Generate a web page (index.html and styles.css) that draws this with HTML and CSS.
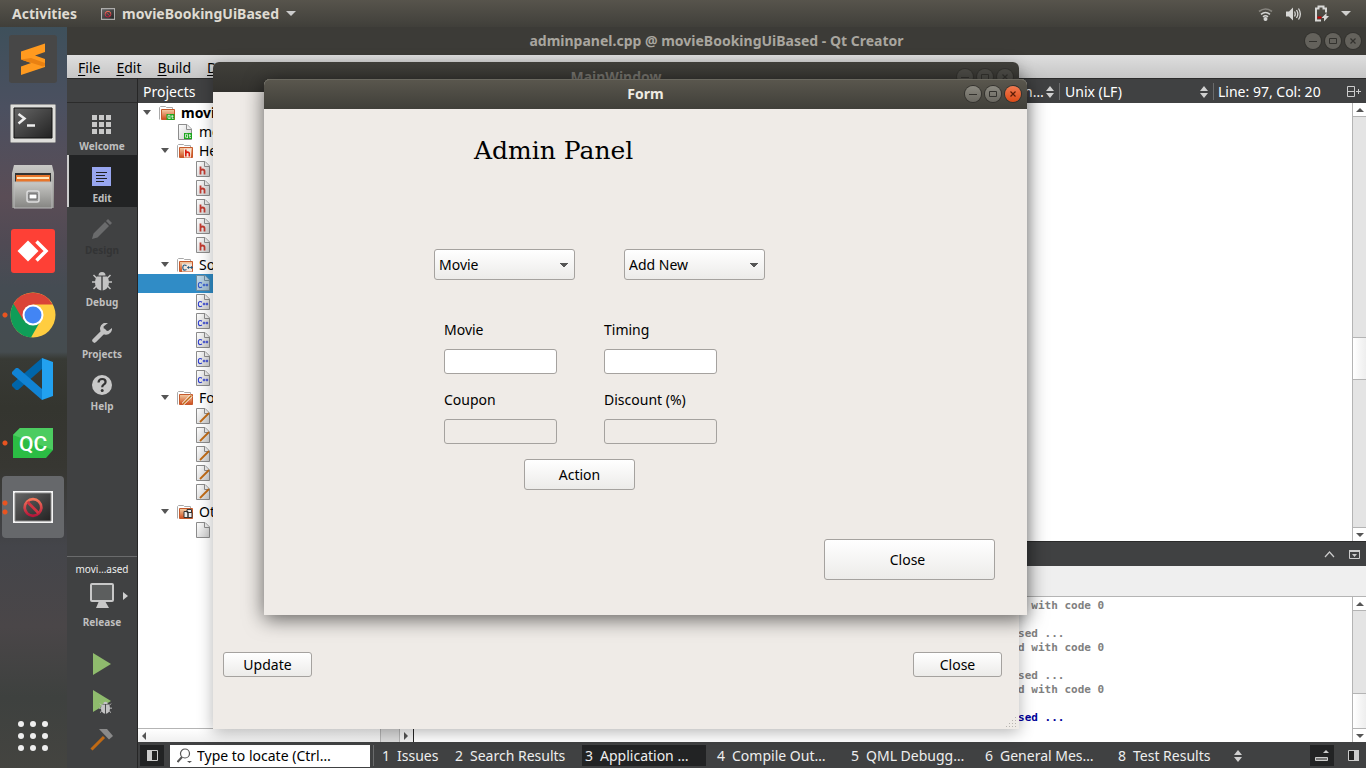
FILE: index.html
```html
<!DOCTYPE html>
<html lang="en">
<head>
<meta charset="utf-8">
<title>movieBookingUiBased</title>
<link rel="stylesheet" href="styles.css">
</head>
<body class="desktop">
<svg class="defs" aria-hidden="true">
  <defs>
    <linearGradient id="gPaper" x1="0" y1="0" x2="1" y2="1"><stop offset="0" stop-color="#fff"/><stop offset="1" stop-color="#ccc"/></linearGradient>
    <linearGradient id="gFolder" x1="0" y1="0" x2="0" y2="1"><stop offset="0" stop-color="#f3cfa6"/><stop offset="1" stop-color="#cf4a1a"/></linearGradient>
    <linearGradient id="gScreen" x1="0" y1="0" x2="1" y2="1"><stop offset="0" stop-color="#666"/><stop offset="1" stop-color="#222"/></linearGradient>
    <linearGradient id="gMetal" x1="0" y1="0" x2="0" y2="1"><stop offset="0" stop-color="#c9c9c6"/><stop offset="1" stop-color="#858582"/></linearGradient>
    <linearGradient id="gRed" x1="0" y1="0" x2="0" y2="1"><stop offset="0" stop-color="#f4775a"/><stop offset="1" stop-color="#b8153a"/></linearGradient>
    <symbol id="file" viewBox="0 0 14 16"><path d="M.5.5h8.500l4.500 4.500v10.500h-13z" fill="url(#gPaper)" stroke="#8c8c8c"/><path d="M8.500.5v5h5" fill="#eee" stroke="#8c8c8c"/></symbol>
    <symbol id="folder" viewBox="0 0 17 16"><path d="M.5 14.500v-12l1-1h5l1 1h6v2" fill="#fff" stroke="#aaa"/><path d="M2.500 4.500h13v10h-13z" fill="url(#gFolder)" stroke="#c65a2c"/></symbol>
    <symbol id="h" viewBox="0 0 8 8"><path d="M1.500 0v8M1.500 4.500q0-1.500 2-1.500t2 1.800v3.200" fill="none" stroke="currentColor" stroke-width="1.800"/></symbol>
    <symbol id="cpp" viewBox="0 0 11 7"><path d="M4.500 1.600q-3.500-1.800-3.700 1.900 0 3.800 3.700 2M5.200 3.500h2.600m.3 0h2.800M6.500 2.200v2.600M9.500 2.200v2.600" fill="none" stroke="currentColor" stroke-width="1.200"/></symbol>
    <symbol id="qt" viewBox="0 0 8 6"><path d="M0 0h8v6h-8z" fill="#1da61d"/><path d="M1.500 1.300h2v3h-2zM3 4l1 1M5.700 1v3.500h1.300M4.800 2.300h2.200" fill="none" stroke="#fff" stroke-width=".7"/></symbol>
    <symbol id="fileH" viewBox="0 0 14 16"><use href="#file" width="14" height="16"/><use href="#h" x="3" y="5" width="8" height="9" color="#c03a30"/></symbol>
    <symbol id="fileC" viewBox="0 0 14 16"><use href="#file" width="14" height="16"/><use href="#cpp" x="1.500" y="6.500" width="11" height="7" color="#2f3fd0"/></symbol>
    <symbol id="fileQ" viewBox="0 0 14 16"><use href="#file" width="14" height="16"/><use href="#qt" x="6" y="9" width="8" height="6"/></symbol>
    <symbol id="fileU" viewBox="0 0 14 16"><use href="#file" width="14" height="16"/><path d="M4 14l9-9" stroke="#c06a14" stroke-width="1.800"/></symbol>
    <symbol id="bug" viewBox="0 0 20 20"><g fill="#c3c3c3"><path d="M6.500 4.500a3.500 3.500 0 0 1 7 0z"/><path d="M9.300 5.500v14c-7-.8-7.500-10-4.500-14zM10.700 5.500v14c7-.8 7.500-10 4.500-14z"/></g><path d="M4.500 7L1.500 4M0 11h4M4.500 15l-3 3M15.500 7l3-3M20 11h-4M15.500 15l3 3" stroke="#c3c3c3" stroke-width="1.500"/></symbol>
    <symbol id="wmin" viewBox="0 0 16 16"><path d="M4 8.500h8" stroke="currentColor" fill="none"/></symbol>
    <symbol id="wmax" viewBox="0 0 16 16"><path d="M4.500 5.500h7v5h-7z" stroke="currentColor" fill="none"/></symbol>
    <symbol id="wcls" viewBox="0 0 16 16"><path d="M5.500 5.500l5 5m0-5l-5 5" stroke="currentColor" stroke-width="1.200" fill="none"/></symbol>
    <symbol id="updown" viewBox="0 0 8 12"><path d="M0 5l4-5 4 5zM0 7l4 5 4-5z" fill="#d0d0d0"/></symbol>
    <symbol id="blocked" viewBox="0 0 40 32"><path d="M0 0h40v32h-40z" fill="#f5f5f5"/><path d="M2 2h36v28h-36z" fill="url(#gScreen)" stroke="#888"/><circle cx="20" cy="16.500" r="8.300" fill="none" stroke="url(#gRed)" stroke-width="2.800"/><path d="M14.500 11l11 11" stroke="#cf3542" stroke-width="2.800"/></symbol>
  </defs>
</svg>

<header class="topbar">
  <button class="top-item">Activities</button>
  <button class="top-item app-menu">
    <svg width="14" height="12"><use href="#blocked"/></svg>
    movieBookingUiBased
    <svg width="10" height="6"><path d="M0 0h10l-5 5z" fill="#ccc"/></svg>
  </button>
  <div class="tray">
    <svg width="15" height="14" fill="none" stroke="#d4d4d2" stroke-width="1.600"><path d="M1 4.500q6.500-5 13 0" stroke="#85837d"/><path d="M3 7.300q4.500-3.600 9 0M5 9.800q2.500-2 5 0"/><circle cx="7.500" cy="12" r="1.200" fill="#d4d4d2"/></svg>
    <svg width="17" height="14"><path d="M1 4.500h3l4-4v13l-4-4h-3z" fill="#d8d8d6"/><path d="M9.500 4.500q1.500 2.500 0 5M11.500 3q2.700 4 0 8M13.500 1.500q3.700 5.500 0 11" fill="none" stroke="#d8d8d6" stroke-width="1.300"/></svg>
    <svg width="15" height="17"><path d="M7 15.500H2V3.500h2.500v-2h5v2H12v4" fill="none" stroke="#d8d8d6" stroke-width="2"/><path d="M3.500 11.500h4v2h-4z" fill="#c00"/><path d="M12.500 8v3h2.500l-5 5.500v-3.500H7.500z" fill="#d8d8d6"/></svg>
    <svg width="10" height="6"><path d="M0 0h10l-5 5z" fill="#d0d0ce"/></svg>
  </div>
</header>

<main class="workspace">
  <nav class="dock" aria-label="Dock">
    <a class="dock-item" href="#" aria-label="Sublime Text"><svg width="48" height="48"><rect width="48" height="48" rx="3" fill="#474747"/><path d="M12 16.500L36 8.500v8.500l-10 3.500 10 3.500v8L12 40v-8.500l10-3.500-10-3.500z" fill="#ff9a1f"/><path d="M12 24.500l22 7 2-1v-2.500l-14-5z" fill="#e98112"/></svg></a>
    <a class="dock-item" href="#" aria-label="Terminal"><svg width="46" height="39"><rect x=".5" y=".5" width="45" height="38" rx="1" fill="#dededb" stroke="#999"/><path d="M4 4h38v30h-38z" fill="url(#gScreen)" stroke="#111"/><path d="M8.500 10l6 4.500-6 5M17 21.500h8" fill="none" stroke="#eee" stroke-width="2.500"/></svg></a>
    <a class="dock-item" href="#" aria-label="Files"><svg width="42" height="46"><path d="M2 1h38l2 8v35H0V9z" fill="url(#gMetal)"/><path d="M3 9h36v9H3z" fill="#333"/><path d="M4 11h34v7H4z" fill="#e8752a"/><path d="M5 14h32" stroke="#ffe5ba" stroke-width="2"/><path d="M2 18h38v26H2z" fill="url(#gMetal)" stroke="#bbb"/><rect x="15" y="27" width="12" height="11" rx="2" fill="#999" stroke="#ddd" stroke-width="1.500"/><path d="M17 30h8v5h-8z" fill="#fff" stroke="#666"/></svg></a>
    <a class="dock-item" href="#" aria-label="AnyDesk"><svg width="44" height="44"><rect width="44" height="44" rx="3" fill="#fe4036"/><path d="M6.500 22L17 11.500 27.500 22 17 32.500z" fill="#fff"/><path d="M25.500 12.500l9.500 9.500-9.500 9.500" fill="none" stroke="#fff" stroke-width="3.500"/></svg></a>
    <a class="dock-item run-1" href="#" aria-label="Google Chrome"><svg width="46" height="46" viewBox="0 0 46 46"><circle cx="23" cy="23" r="22.500" fill="#ffcd40"/><path d="M23 23L3.500 11.800A22.500 22.500 0 0 0 21 45.400l10-17.500z" fill="#0f9d58"/><path d="M3.500 11.800A22.500 22.500 0 0 1 42.700 12.500H23l-9.500 16z" fill="#db4437"/><circle cx="23" cy="23" r="10.500" fill="#fff"/><circle cx="23" cy="23" r="8.500" fill="#4285f4"/></svg></a>
    <a class="dock-item" href="#" aria-label="Visual Studio Code"><svg width="44" height="44"><path d="M31 1v11L7 33H5l-4-4v-2z" fill="#0065a9"/><path d="M31 43V32L7 11H5l-4 4v2z" fill="#1183d4"/><path d="M31 1l11 4v34l-11 4z" fill="#22a1f0"/></svg></a>
    <a class="dock-item run-1" href="#" aria-label="Qt Creator"><svg width="40" height="30"><path d="M7 0h33v22l-7 8H0V7z" fill="#2bbd44"/><path d="M7 0h33v22L0 7z" fill="#4ccc60"/><text x="6" y="23" class="qc">QC</text></svg></a>
    <a class="dock-item run-2 current" href="#" aria-label="movieBookingUiBased"><svg width="40" height="32"><use href="#blocked"/></svg></a>
    <button class="app-grid" aria-label="Show applications"><i></i><i></i><i></i><i></i><i></i><i></i><i></i><i></i><i></i></button>
  </nav>

  <section class="ide">
    <div class="ide-title">
      <span>adminpanel.cpp @ movieBookingUiBased - Qt Creator</span>
      <div class="wbtns"><button aria-label="Minimize"><svg><use href="#wmin"/></svg></button><button aria-label="Maximize"><svg><use href="#wmax"/></svg></button><button aria-label="Close"><svg><use href="#wcls"/></svg></button></div>
    </div>
    <nav class="menubar"><a href="#"><u>F</u>ile</a><a href="#"><u>E</u>dit</a><a href="#"><u>B</u>uild</a><a href="#"><u>D</u>ebug</a><a href="#"><u>A</u>nalyze</a><a href="#"><u>T</u>ools</a><a href="#"><u>W</u>indow</a><a href="#"><u>H</u>elp</a></nav>
    <div class="ide-body">
      <aside class="modes">
        <div class="modes-top"></div>
        <button class="mode"><svg width="20" height="20" fill="#c8c8c8"><path d="M0 0h5v5H0zM7 0h5v5H7zM14 0h5v5h-5zM0 7h5v5H0zM7 7h5v5H7zM14 7h5v5h-5zM0 14h5v5H0zM7 14h5v5H7zM14 14h5v5h-5z"/></svg>Welcome</button>
        <button class="mode on"><svg width="20" height="20"><path d="M0 0h19v19H0z" fill="#98a6f0"/><path d="M4 5.500h11M4 8.500h9M4 11.500h11M4 14.500h8" stroke="#222"/></svg>Edit</button>
        <button class="mode off" disabled><svg width="20" height="20" fill="#6a6b6c"><path d="M0 20l1.500-5.500L13 3l4 4L5.500 18.500zM14 2l2-2 4 4-2 2z"/></svg>Design</button>
        <button class="mode"><svg width="20" height="20"><use href="#bug"/></svg>Debug</button>
        <button class="mode"><svg width="20" height="20"><path d="M2.500 17.500L12 8" stroke="#c3c3c3" stroke-width="4.500" stroke-linecap="round"/><path d="M16 0a6 6 0 1 0 4 5l-4 3-4-1-.5-3.500z" fill="#c3c3c3"/></svg>Projects</button>
        <button class="mode"><svg width="20" height="20"><circle cx="10" cy="10" r="10" fill="#c8c8c8"/><path d="M6.500 7.500q.3-3.500 3.700-3.500t3.400 3q0 1.500-1.900 2.600-1.500 1-1.500 2.700" fill="none" stroke="#333" stroke-width="2.200"/><circle cx="10.200" cy="15.500" r="1.500" fill="#333"/></svg>Help</button>
        <div class="kit">
          <span class="kit-name">movi…ased</span>
          <button class="kit-btn"><svg class="monitor" width="24" height="25"><rect x="1" y="1" width="22" height="17" rx="1" fill="#5c5e5e" stroke="#c8c8c8" stroke-width="2"/><path d="M9 18h6l4 7H6z" fill="#c8c8c8"/></svg><svg class="more" width="5" height="8"><path d="M0 0l5 4-5 4z" fill="#d0d0d0"/></svg><span class="kit-mode">Release</span></button>
          <button class="run" aria-label="Run"><svg width="20" height="22"><path d="M1 0l18 11L1 22z" fill="#8fbb6d"/></svg></button>
          <button class="run" aria-label="Debug run"><svg width="20" height="24"><path d="M1 0l18 11L1 22z" fill="#8fbb6d"/><circle cx="14" cy="18" r="5" fill="#404142"/><use href="#bug" x="7" y="11" width="13" height="13"/></svg></button>
          <button class="run" aria-label="Build"><svg width="24" height="24"><path d="M1.500 21.500L14 9" stroke="#c06a14" stroke-width="3"/><path d="M9 1h8l6 7-4 3.500z" fill="#8a8a8a"/></svg></button>
        </div>
      </aside>
      <div class="center">
        <div class="panes">
          <section class="projects">
            <div class="bar">Projects</div>
            <ul class="tree">
              <li class="l0"><b class="tri"></b><svg width="17" height="16"><use href="#folder"/><use href="#qt" x="7" y="9" width="9" height="6"/></svg><strong>movieBookingUiBased</strong></li>
              <li class="l1"><svg width="14" height="16"><use href="#fileQ"/></svg>movieBookingUiBased.pro</li>
              <li class="l1f"><b class="tri"></b><svg width="17" height="16"><use href="#folder"/><path d="M7 5.500h7v9H7z" fill="#f6e5d8"/><use href="#h" x="7.500" y="6" width="7" height="8" color="#d81c10"/></svg>Headers</li>
              <li class="l2"><svg width="14" height="16"><use href="#fileH"/></svg></li>
              <li class="l2"><svg width="14" height="16"><use href="#fileH"/></svg></li>
              <li class="l2"><svg width="14" height="16"><use href="#fileH"/></svg></li>
              <li class="l2"><svg width="14" height="16"><use href="#fileH"/></svg></li>
              <li class="l2"><svg width="14" height="16"><use href="#fileH"/></svg></li>
              <li class="l1f"><b class="tri"></b><svg width="17" height="16"><use href="#folder"/><path d="M5 6.500h10v8H5z" fill="#f1e4da"/><use href="#cpp" x="5" y="7" width="11" height="7" color="#245a80"/></svg>Sources</li>
              <li class="l2 sel"><svg width="14" height="16"><use href="#fileC"/></svg></li>
              <li class="l2"><svg width="14" height="16"><use href="#fileC"/></svg></li>
              <li class="l2"><svg width="14" height="16"><use href="#fileC"/></svg></li>
              <li class="l2"><svg width="14" height="16"><use href="#fileC"/></svg></li>
              <li class="l2"><svg width="14" height="16"><use href="#fileC"/></svg></li>
              <li class="l2"><svg width="14" height="16"><use href="#fileC"/></svg></li>
              <li class="l1f"><b class="tri"></b><svg width="17" height="16"><use href="#folder"/><path d="M6 14l8.500-8.500" stroke="#fff" stroke-width="3"/><path d="M6 14l8.500-8.500" stroke="#c06a14" stroke-width="1.600"/></svg>Forms</li>
              <li class="l2"><svg width="14" height="16"><use href="#fileU"/></svg></li>
              <li class="l2"><svg width="14" height="16"><use href="#fileU"/></svg></li>
              <li class="l2"><svg width="14" height="16"><use href="#fileU"/></svg></li>
              <li class="l2"><svg width="14" height="16"><use href="#fileU"/></svg></li>
              <li class="l2"><svg width="14" height="16"><use href="#fileU"/></svg></li>
              <li class="l1f"><b class="tri"></b><svg width="17" height="16"><use href="#folder"/><path d="M7 7.500h4v6H7zM10 5.500h4.500v3H10zM11 8.500h4v5h-4z" fill="#eee" stroke="#333"/></svg>Other files</li>
              <li class="l2"><svg width="14" height="16"><use href="#file"/></svg></li>
            </ul>
            <div class="hscroll"><b class="arr left"></b><span class="hthumb"></span><b class="arr right"></b></div>
          </section>
          <section class="editor">
            <div class="bar edit-bar">
              <span>adminpanel.cpp</span>
              <button class="combo sym">n…<svg width="8" height="12"><use href="#updown"/></svg></button>
              <button class="combo eol">Unix (LF)<svg width="8" height="12"><use href="#updown"/></svg></button>
              <button class="combo pos">Line: 97, Col: 20</button>
              <button class="combo split" aria-label="Split"><svg width="15" height="12" fill="none" stroke="#ccc"><path d="M.5.5h7v10h-7zM.5 5.500h7M9 5.500h5M11.500 3v5"/></svg></button>
            </div>
            <div class="pane code"><div class="page"></div><div class="vscroll"><b class="cap"><b class="arr up"></b></b><span class="track upper"></span><span class="thumb"></span><span class="track"></span><b class="cap"><b class="arr down"></b></b></div></div>
            <div class="bar out-bar">
              <button class="plain" aria-label="Maximize output"><svg width="11" height="7"><path d="M1 6l4.500-5L10 6" fill="none" stroke="#ccc" stroke-width="1.200"/></svg></button>
              <button class="plain" aria-label="Close output"><svg width="12" height="10"><path d="M.5.5h10v8H.5z" fill="none" stroke="#ccc"/><path d="M0 0h11v2H0zM3 4h5l-2.500 3z" fill="#ccc"/></svg></button>
            </div>
            <div class="out-tools"></div>
            <div class="pane output"><pre class="page">exited with code 0

 UiBased ...
exited with code 0

 UiBased ...
exited with code 0

<em> UiBased ...</em></pre><div class="vscroll"><b class="cap"><b class="arr up"></b></b><span class="track"></span><span class="thumb low"></span><b class="cap"><b class="arr down"></b></b></div></div>
          </section>
        </div>
        <footer class="status">
          <button class="tgl on" aria-label="Toggle sidebar"><svg width="11" height="11"><path d="M.5.5h10v10H.5z" fill="#222" stroke="#ccc"/><path d="M0 0h5v11H0z" fill="#ccc"/></svg></button>
          <label class="locator"><svg width="16" height="16" fill="none" stroke="#555"><circle cx="8" cy="5.500" r="4.500" stroke-width="1.200"/><path d="M5 9l-4.500 5" stroke-width="2"/><path d="M10 13h5l-2.500 2z" fill="#555" stroke="none"/></svg><input type="text" aria-label="Locate" placeholder="Type to locate (Ctrl…"></label>
          <nav class="outs">
            <button><span>1</span>Issues</button><button><span>2</span>Search Results</button><button class="on"><span>3</span>Application …</button><button><span>4</span>Compile Out…</button><button><span>5</span>QML Debugg…</button><button><span>6</span>General Mes…</button><button><span>8</span>Test Results</button>
          </nav>
          <button class="plain" aria-label="More panes"><svg width="8" height="12"><use href="#updown"/></svg></button>
          <span class="grow"></span>
          <button class="tgl on" aria-label="Progress details"><svg width="14" height="12"><path d="M8 3l3-3 3 3z" fill="#ccc"/><path d="M.5 7.500h12v3H.5z" fill="#777" stroke="#ccc"/></svg></button>
          <button class="tgl last" aria-label="Toggle right sidebar"><svg width="11" height="11"><path d="M.5.5h10v10H.5z" fill="#222" stroke="#ccc"/><path d="M6 0h5v11H6z" fill="#ccc"/></svg></button>
        </footer>
      </div>
    </div>
  </section>
</main>

<section class="window main-window">
  <div class="titlebar"><span>MainWindow</span><div class="wbtns"><button aria-label="Minimize"><svg><use href="#wmin"/></svg></button><button aria-label="Maximize"><svg><use href="#wmax"/></svg></button><button aria-label="Close"><svg><use href="#wcls"/></svg></button></div></div>
  <div class="main-actions"><button class="btn small">Update</button><button class="btn small">Close</button></div>
  <svg class="grip" width="11" height="11" fill="#b8b5b0"><path d="M9 0h1v1H9zM6 3h1v1H6zM9 3h1v1H9zM3 6h1v1H3zM6 6h1v1H6zM9 6h1v1H9zM0 9h1v1H0zM3 9h1v1H3zM6 9h1v1H6zM9 9h1v1H9z"/></svg>
</section>

<section class="window form-window">
  <div class="titlebar"><span>Form</span><div class="wbtns"><button aria-label="Minimize"><svg><use href="#wmin"/></svg></button><button aria-label="Maximize"><svg><use href="#wmax"/></svg></button><button class="red" aria-label="Close"><svg><use href="#wcls"/></svg></button></div></div>
  <form class="panel">
    <h1>Admin Panel</h1>
    <div class="selects">
      <select aria-label="Item"><option>Movie</option><option>Coupon</option></select>
      <select aria-label="Operation"><option>Add New</option></select>
    </div>
    <div class="fields">
      <label>Movie<input type="text"></label>
      <label>Timing<input type="text"></label>
      <label>Coupon<input type="text" disabled></label>
      <label>Discount (%)<input type="text" disabled></label>
    </div>
    <button type="button" class="btn action">Action</button>
    <button type="button" class="btn close">Close</button>
  </form>
</section>
</body>
</html>
```
FILE: styles.css
```css
* { box-sizing: border-box; }
body.desktop {
  margin: 0;
  height: 100vh;
  overflow: hidden;
  position: relative;
  display: flex;
  flex-direction: column;
  font: 14px/18px "Noto Sans", sans-serif;
  color: #000;
}
button, input, select { font: inherit; color: inherit; margin: 0; padding: 0; border: 0; background: none; }
button { display: flex; align-items: center; justify-content: center; }
a { color: inherit; text-decoration: none; }
svg { display: block; flex: none; }
.defs { position: absolute; width: 0; height: 0; }
.grow { flex: 1; }

.topbar {
  height: 27px;
  flex: none;
  display: flex;
  align-items: center;
  gap: 24px;
  padding: 0 15px 0 12px;
  background: linear-gradient(#57544c, #403f3a);
  color: #dfdbd2;
  font-weight: bold;
}
.app-menu { gap: 7px; }
.tray { margin-left: auto; display: flex; align-items: center; gap: 12px; }

.workspace { flex: 1; min-height: 0; display: flex; }
.dock {
  width: 67px;
  flex: none;
  display: flex;
  flex-direction: column;
  align-items: center;
  gap: 2px;
  padding: 1px 3px 8px 2px;
  background: linear-gradient(#3e505b 0, #4b5060 80px, #5a4d56 170px, #504a54 215px, #454c53 260px, #454c4f 325px, #383a35 332px, #34352f 380px, #373732 440px, #44454a 520px, #4a4648 600px, #3e413f 670px, #444440 100%);
}
.dock-item {
  width: 62px;
  height: 62px;
  display: grid;
  place-items: center;
  border-radius: 4px;
  background-repeat: no-repeat;
}
.dock-item.run-1 { background-image: radial-gradient(circle at 3px 31px, #e95420 2px, transparent 3px); }
.dock-item.run-2 { background-image: radial-gradient(circle at 3px 27px, #e95420 2px, transparent 3px), radial-gradient(circle at 3px 36px, #e95420 2px, transparent 3px); }
.dock-item.current { background-color: #66686b; }
.qc { font: 500 21px "Roboto", sans-serif; fill: #fff; }
.app-grid { margin-top: auto; width: 48px; height: 48px; display: grid; grid-template-columns: repeat(3, 6px); gap: 6px; place-content: center; }
.app-grid i { width: 6px; height: 6px; border-radius: 50%; background: #eee; }

.ide { flex: 1; min-width: 0; display: flex; flex-direction: column; }
.ide-title, .titlebar { display: grid; grid-template-columns: 1fr auto 1fr; align-items: center; font-weight: bold; }
.ide-title span, .titlebar span { grid-column: 2; }
.ide-title { height: 28px; flex: none; background: #3c3b37; color: #a9a69f; padding: 0 5px; }
.wbtns { grid-column: 3; justify-self: end; display: flex; gap: 4px; }
.wbtns button { width: 16px; height: 16px; border-radius: 50%; background: #64625c; color: #33322e; box-shadow: 0 0 0 1px #33322e; }
.wbtns svg { width: 16px; height: 16px; }
.menubar { height: 23px; flex: none; display: flex; align-items: center; gap: 16px; padding: 3px 11px 0; background: linear-gradient(#dedede, #c6c6c6); }
.menubar u { text-underline-offset: 2px; }
.ide-body { flex: 1; min-height: 0; display: flex; }

.modes { width: 71px; flex: none; display: flex; flex-direction: column; background: #404142; border-right: 1px solid #262626; color: #bfbfbf; font-size: 10px; line-height: 12px; font-weight: bold; }
.modes-top { height: 25px; border-top: 1px solid #2b2b2b; border-bottom: 1px solid #2b2b2b; }
.mode { height: 52px; flex-direction: column; gap: 5px; padding-top: 8px; }
.mode.on { background: #222324; box-shadow: inset 2px 0 #ccc; }
.mode.off { color: #333435; }
.kit { margin-top: auto; display: flex; flex-direction: column; align-items: stretch; border-top: 1px solid #6a6b6c; padding: 6px 0 16px; text-align: center; }
.kit-name { font-weight: normal; color: #eee; }
.kit-btn { display: grid; grid-template-columns: 1fr 24px 1fr; align-items: center; row-gap: 8px; margin: 8px 0 24px; }
.monitor { grid-column: 2; }
.more { grid-column: 3; justify-self: center; }
.kit-mode { grid-column: 1 / -1; }
.run { height: 24px; margin-bottom: 14px; }
.run:last-child { margin-bottom: 0; }

.center { flex: 1; min-width: 0; display: flex; flex-direction: column; }
.panes { flex: 1; min-height: 0; display: flex; background: #fff; }
.bar { height: 25px; flex: none; display: flex; align-items: center; padding-top: 1px; background: #404142; border-top: 1px solid #2b2b2b; color: #fff; }
.projects { width: 276px; flex: none; display: flex; flex-direction: column; border-right: 1px solid #262626; }
.projects .bar { padding-left: 5px; }
.tree { flex: 1; min-height: 0; overflow: hidden; list-style: none; margin: 0; padding: 0; }
.tree li { height: 19px; display: flex; align-items: center; white-space: nowrap; }
.tree .l0 { padding-left: 5px; gap: 5px; }
.tree .l1 { padding-left: 40px; gap: 7px; }
.tree .l1f { padding-left: 23px; gap: 5px; }
.tree .l2 { padding: 0 0 1px 58px; }
.tree .sel { background: #308cc6; }
.tree .sel svg { opacity: .7; }
.tri { width: 8px; margin-right: 3px; border: 4px solid transparent; border-top: 5px solid #555; border-bottom: 0; }
.arr { width: 0; height: 0; border: 4px solid transparent; }
.arr.up { border-bottom-color: #555; border-top: 0; }
.arr.down { border-top-color: #555; border-bottom: 0; }
.arr.left { border-right-color: #555; border-left: 0; }
.arr.right { border-left-color: #555; border-right: 0; }
.hscroll { height: 14px; display: flex; align-items: center; padding: 0 5px 0 4px; background: linear-gradient(#fff, #f0f0f0); border-top: 1px solid #b4b4b4; }
.hthumb { margin: 0 4px 0 auto; width: 20px; height: 13px; background: #dcdcdc; border: solid #b4b4b4; border-width: 0 1px; }

.editor { flex: 1; min-width: 0; display: flex; flex-direction: column; }
.edit-bar { padding: 1px 4px 0 7px; }
.combo { height: 17px; border-left: 1px solid #6a6b6c; padding: 0 5px; justify-content: space-between; }
.combo.sym { margin-left: auto; width: 40px; border: 0; }
.combo.eol { width: 154px; }
.combo.pos { width: 134px; justify-content: flex-start; padding: 0 4px; }
.combo.split { border: 0; padding: 0; }
.pane { display: flex; min-height: 0; }
.pane .page { flex: 1; margin: 0; }
.code { flex: 1; }
.vscroll { width: 14px; display: flex; flex-direction: column; border-left: 1px solid #b4b4b4; background: #e4e4e4; }
.cap { height: 14px; display: grid; place-items: center; background: #fff; border: solid #b4b4b4; border-width: 0 0 1px; }
.cap:last-child { border-width: 1px 0 0; }
.track { flex: 2; }
.track.upper { flex: 3; }
.thumb { height: 43px; border: solid #b4b4b4; border-width: 1px 0; background: linear-gradient(90deg, #fff, #eee); }
.thumb.low { height: 35px; border-bottom: 0; }
.out-bar { justify-content: flex-end; gap: 14px; padding-right: 5px; }
.out-tools { height: 31px; flex: none; background: #efefef; border-bottom: 1px solid #b4b4b4; }
.output { height: 145px; flex: none; }
.output .page { padding: 2px 0 0 571px; font: bold 11px/14px "DejaVu Sans Mono", monospace; color: #808080; }
.output em { font-style: normal; color: #00009a; }

.status { height: 26px; flex: none; display: flex; align-items: center; padding: 1px 2px 0; background: #404142; color: #eee; }
.tgl { width: 24px; height: 21px; }
.tgl.on { background: #222324; }
.tgl.last { width: 22px; margin-left: 8px; }
.locator { width: 200px; height: 22px; margin: 0 3px 0 6px; display: flex; align-items: center; gap: 4px; padding-left: 7px; background: #fff; color: #000; }
.locator input { width: 170px; outline: 0; }
.locator input::placeholder { color: #000; opacity: 1; }
.outs { display: grid; grid-template-columns: 73px 135px 124px 139px 134px 133px 122px; border-left: 1px solid #6a6b6c; }
.outs button { height: 21px; justify-content: flex-start; gap: 7px; padding-left: 8px; white-space: nowrap; }
.outs button:nth-child(3) { padding-left: 3px; background: #222324; }
.outs button:nth-child(4) { padding-left: 11px; }
.outs button:nth-child(n+5) { padding-left: 6px; }

.window { position: absolute; display: flex; flex-direction: column; background: #efebe7; border-radius: 6px 6px 0 0; }
.titlebar { height: 30px; flex: none; padding: 0 6px; border-radius: 6px 6px 0 0; }
.main-window { left: 213px; top: 62px; width: 806px; height: 667px; box-shadow: 0 3px 16px rgba(0, 0, 0, .3); }
.main-window .titlebar { background: linear-gradient(#403f3a, #33322e); color: #74726c; }
.main-window .wbtns button { background: #4c4b46; }
.main-actions { margin-top: auto; display: flex; justify-content: space-between; padding: 0 17px 52px 10px; }
.grip { position: absolute; right: 2px; bottom: 1px; }
.form-window { left: 264px; top: 79px; width: 763px; height: 536px; box-shadow: 0 4px 20px rgba(0, 0, 0, .6); }
.form-window .titlebar { background: linear-gradient(#5a574e, #403f39); box-shadow: inset 0 1px #6a685f; color: #eeebe2; }
.form-window .wbtns button { background: linear-gradient(#8b8980, #6a6861); }
.form-window .wbtns .red { background: linear-gradient(#f17a50, #dd4b17); color: #5a1c06; }
.btn { border: 1px solid #a5a29f; border-radius: 3px; background: linear-gradient(#fff, #ecebe9); height: 31px; }
.btn.small { width: 89px; height: 25px; }
.panel { flex: 1; display: flex; flex-direction: column; align-items: flex-start; padding: 24px 32px 35px 170px; }
.panel h1 { margin: 0 0 80px 40px; font: 25px/36px "DejaVu Serif", serif; }
.selects { display: flex; gap: 49px; }
.selects select {
  appearance: none;
  width: 141px;
  height: 31px;
  padding: 0 20px 0 4px;
  border: 1px solid #a5a29f;
  border-radius: 3px;
  background: linear-gradient(to bottom right, #555 50%, transparent 51%) right 6px top 13px / 4px 5px no-repeat, linear-gradient(to bottom left, #555 50%, transparent 51%) right 10px top 13px / 4px 5px no-repeat, linear-gradient(#fff, #ecebe9);
}
.fields { display: grid; grid-template-columns: 113px 113px; column-gap: 47px; row-gap: 16px; margin: 40px 0 15px 10px; }
.fields label { display: flex; flex-direction: column; gap: 10px; line-height: 19px; }
.fields input { height: 25px; padding: 0 4px; border: 1px solid #a5a29f; border-radius: 3px; background: #fff; }
.fields input:disabled { background: #efebe7; }
.btn.action { width: 111px; margin-left: 90px; }
.btn.close { width: 171px; height: 41px; margin-top: auto; align-self: flex-end; padding-right: 4px; }
```
